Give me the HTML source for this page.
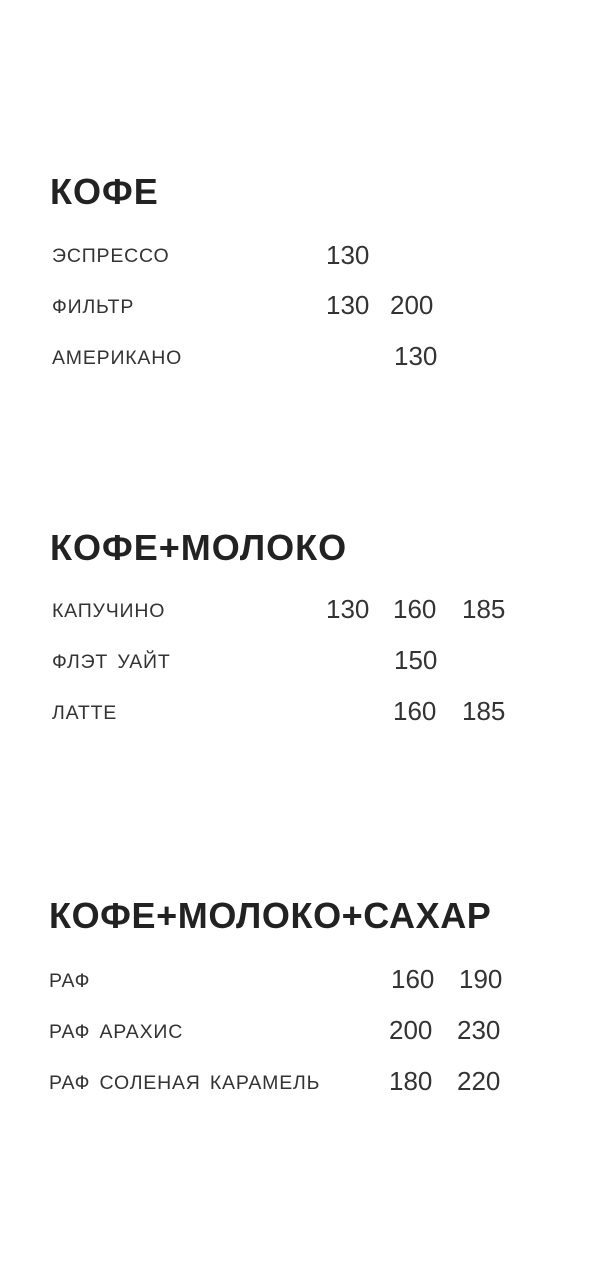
<!DOCTYPE html>
<html><head><meta charset="utf-8"><style>
body{margin:0;width:591px;height:1280px;background:#fff;position:relative;overflow:hidden;font-family:"Liberation Sans",sans-serif;color:#262626}
div{position:absolute;line-height:1;white-space:nowrap}
.h{font-size:36px;font-weight:bold;color:#222;letter-spacing:1px}
.i{font-size:19.5px;letter-spacing:0.8px;word-spacing:3px;color:#333}
.p{font-size:26px;color:#333}
</style></head><body>
<div class="h" style="left:50px;top:174px">КОФЕ</div>
<div class="i" style="left:52px;top:247px">ЭСПРЕССО</div>
<div class="i" style="left:52px;top:298px">ФИЛЬТР</div>
<div class="i" style="left:52px;top:349px">АМЕРИКАНО</div>
<div class="p" style="left:326px;top:242px">130</div>
<div class="p" style="left:326px;top:292px">130</div>
<div class="p" style="left:390px;top:292px">200</div>
<div class="p" style="left:394px;top:343px">130</div>

<div class="h" style="left:50px;top:530px">КОФЕ+МОЛОКО</div>
<div class="i" style="left:52px;top:602px">КАПУЧИНО</div>
<div class="i" style="left:52px;top:653px">ФЛЭТ УАЙТ</div>
<div class="i" style="left:52px;top:704px">ЛАТТЕ</div>
<div class="p" style="left:326px;top:596px">130</div>
<div class="p" style="left:393px;top:596px">160</div>
<div class="p" style="left:462px;top:596px">185</div>
<div class="p" style="left:394px;top:647px">150</div>
<div class="p" style="left:393px;top:698px">160</div>
<div class="p" style="left:462px;top:698px">185</div>

<div class="h" style="left:49px;top:898px;letter-spacing:0.6px">КОФЕ+МОЛОКО+САХАР</div>
<div class="i" style="left:49px;top:972px">РАФ</div>
<div class="i" style="left:49px;top:1023px">РАФ АРАХИС</div>
<div class="i" style="left:49px;top:1074px">РАФ СОЛЕНАЯ КАРАМЕЛЬ</div>
<div class="p" style="left:391px;top:966px">160</div>
<div class="p" style="left:459px;top:966px">190</div>
<div class="p" style="left:389px;top:1017px">200</div>
<div class="p" style="left:457px;top:1017px">230</div>
<div class="p" style="left:389px;top:1068px">180</div>
<div class="p" style="left:457px;top:1068px">220</div>
</body></html>
